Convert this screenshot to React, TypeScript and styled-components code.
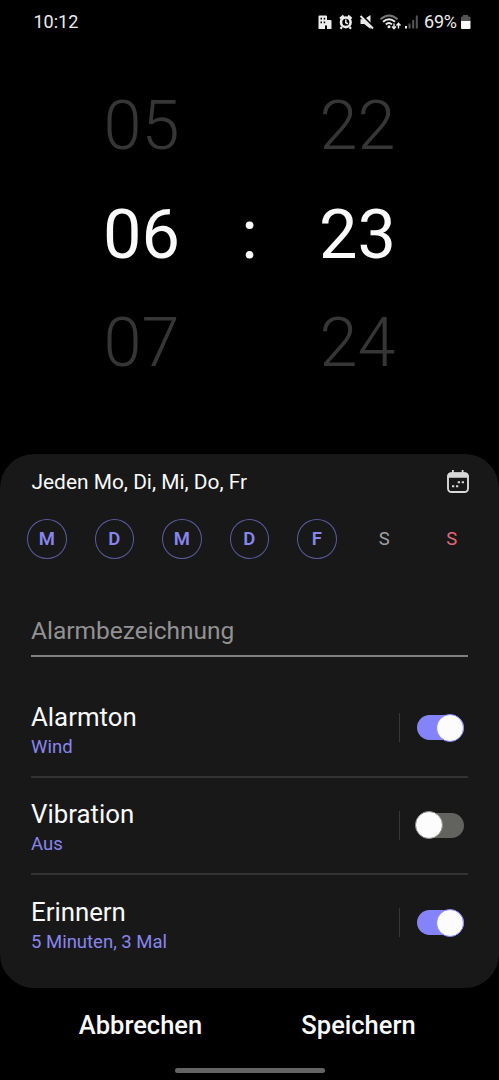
import React from "react";
import styled, { createGlobalStyle } from "styled-components";

const GlobalStyle = createGlobalStyle`
  * { box-sizing: border-box; }
  body { margin: 0; background: #000; font-family: Roboto, "Liberation Sans", sans-serif; color: #fafafa; }
  button, input { font-family: inherit; border: 0; padding: 0; background: none; color: inherit; }
`;

const Screen = styled.main`
  display: flex;
  flex-direction: column;
  width: 499px;
  height: 1080px;
  overflow: hidden;
  background: #000;
`;

const StatusBar = styled.header`
  display: flex;
  justify-content: space-between;
  height: 72px;
  padding: 11px 28px 0 33.5px;
  font-size: 18px;
  line-height: 22px;
  color: #ececec;
`;

const StatusIcons = styled.div`
  display: flex;
  height: 22px;
`;

const BatteryLevel = styled.span`
  width: 35px;
  letter-spacing: -0.2px;
`;

const Picker = styled.section`
  display: grid;
  grid-template-columns: 150px 66px 150px;
  grid-template-rows: repeat(3, 108.5px);
  justify-content: center;
  height: 382px;
`;

const Digits = styled.div<{ $active?: boolean }>`
  display: flex;
  align-items: center;
  justify-content: center;
  font-size: 68.5px;
  line-height: 80px;
  font-weight: ${(p) => (p.$active ? 400 : 300)};
  color: ${(p) => (p.$active ? "#fafafa" : "#363636")};
`;

const Card = styled.section`
  height: 533.5px;
  flex: none;
  border-radius: 34px;
  background: #181818;
`;

const RepeatHeader = styled.div`
  display: flex;
  align-items: center;
  justify-content: space-between;
  height: 54px;
  padding: 1px 29.5px 0 31.5px;
  font-size: 20.9px;
`;

const Days = styled.div`
  display: grid;
  grid-template-columns: repeat(7, 67.5px);
  justify-items: center;
  padding: 11px 0 0 13px;
`;

const Day = styled.button<{ $selected?: boolean; $color: string }>`
  width: 39.5px;
  height: 40px;
  padding-bottom: 1px;
  border: 1px solid ${(p) => (p.$selected ? "#5c5aa0" : "transparent")};
  border-radius: 50%;
  font-size: 18.5px;
  font-weight: ${(p) => (p.$selected ? 600 : 400)};
  color: ${(p) => p.$color};
`;

const NameInput = styled.input`
  display: block;
  width: 437px;
  height: 52px;
  margin: 46px 0 23px 31px;
  padding-top: 1px;
  border-bottom: 2px solid #808080;
  border-radius: 0;
  font-size: 24.5px;
  outline: none;
  &::placeholder { color: #929292; opacity: 1; }
`;

const Option = styled.div`
  display: flex;
  align-items: center;
  height: 97.5px;
  margin: 0 31px;
  border-bottom: 2px solid #333;
  &:last-child { border-bottom-color: transparent; }
`;

const OptionText = styled.div`
  flex: 1;
  padding-top: 7px;
`;

const OptionTitle = styled.div`
  font-size: 25.8px;
  line-height: 31px;
`;

const OptionValue = styled.div`
  font-size: 18.5px;
  line-height: 28px;
  color: #8886ee;
`;

const ToggleArea = styled.div`
  display: flex;
  align-items: center;
  width: 69px;
  height: 29px;
  padding-left: 16.5px;
  border-left: 1px solid #373737;
`;

const Track = styled.span<{ $on: boolean }>`
  display: flex;
  align-items: center;
  justify-content: ${(p) => (p.$on ? "flex-end" : "flex-start")};
  width: 47px;
  height: 25px;
  border-radius: 13px;
  background: ${(p) => (p.$on ? "#8583fa" : "#62635f")};
`;

const Thumb = styled.span<{ $on: boolean }>`
  flex: none;
  width: 28px;
  height: 28px;
  margin: 0 -0.5px 0 -1.5px;
  border: 1px solid ${(p) => (p.$on ? "#8583fa" : "#8c8c88")};
  border-radius: 50%;
  background: #fcfcfc;
`;

const Actions = styled.footer`
  display: flex;
  justify-content: center;
  height: 80.5px;
  padding: 15.5px 31px 0;
`;

const Action = styled.button`
  width: 218px;
  height: 44px;
  font-size: 25.5px;
  font-weight: 500;
`;

const HomeBar = styled.div`
  width: 150px;
  height: 5px;
  margin: 0 auto;
  border-radius: 3px;
  background: #646464;
`;

const StatusGlyphs = () => (
  <svg width="108" height="22" viewBox="316 11 108 22" fill="#ececec">
    <path fillRule="evenodd" d="M319.500 15.500h6.500q1 0 1 1V20h3.500q1 0 1 1v8H327v-3.500h-2V29h-6.500V16.500q0-1 1-1ZM320.500 17.700v1.800h1.500v-1.800Zm3.200 0v1.800h1.500v-1.800Zm-3.200 3.800v1.800h1.500v-1.800Zm3.200 0v1.800h1.500v-1.800Z" />
    <circle cx="345.800" cy="22.300" r="4.800" fill="none" stroke="#ececec" strokeWidth="2.600" />
    <path d="M340 18.700l3.600-3.100M351.600 18.700l-3.600-3.100M342 27l-1.500 1.700M349.500 27l1.500 1.700" fill="none" stroke="#ececec" strokeWidth="2.200" />
    <path d="M345.800 19.500v3.200l2.200 1" fill="none" stroke="#ececec" strokeWidth="1.500" />
    <path d="M360.500 19.300h3.700l6.300-4.300v14l-6.300-5h-3.700Z" />
    <path d="M361.800 15.200l12.500 12.500" stroke="#000" strokeWidth="2.200" />
    <path d="M360.500 16l12.500 12.500" stroke="#ececec" strokeWidth="2" />
    <path d="M380.500 19.200q8.500-7.600 17 0" fill="none" stroke="#777" strokeWidth="1.900" />
    <path d="M383 21.800q6-5.200 12 0M385.800 24.400q3.200-2.600 6.200 0" fill="none" stroke="#ececec" strokeWidth="1.900" />
    <circle cx="389" cy="26.700" r="1.500" />
    <path d="M394 23.500v5m-2-2l2 2.200 2-2.200M398.500 28.500v-5m-2 2l2-2.200 2 2.200" fill="none" stroke="#ececec" strokeWidth="1.400" />
    <path d="M405 26h2v2.500h-2Z" />
    <path d="M408.500 23.500h2v5h-2ZM412.200 20h2v8.500h-2ZM415.800 15.500h2v13h-2Z" fill="#555" />
  </svg>
);

const Battery = () => (
  <svg width="12" height="22" viewBox="459 11 12 22">
    <path d="M463 15h5v1.500h1.500q1 0 1 1V22h-9.500v-4.500q0-1 1-1h1Z" fill="#555" />
    <path d="M461 21h9.500v7q0 1-1 1H462q-1 0-1-1Z" fill="#fafafa" />
  </svg>
);

const CalendarIcon = () => (
  <svg width="24" height="26" viewBox="0 0 24 26">
    <rect x="2" y="4.300" width="20" height="18.700" rx="3.500" fill="none" stroke="#d8d8d8" strokeWidth="1.900" />
    <path d="M1.300 8.800V7q0-3.500 3.500-3.500h14.400q3.500 0 3.500 3.500v1.800ZM6 1h1.800v4H6ZM15.700 1h1.800v4h-1.800Z" fill="#d8d8d8" />
    <path d="M11.700 12.200h2.300v2h-2.300ZM15.700 12.200H18v2h-2.300ZM6 16.300h2.300v2H6ZM10 16.300h2.300v2H10Z" fill="#d8d8d8" />
  </svg>
);

const days = [
  { label: "M", selected: true },
  { label: "D", selected: true },
  { label: "M", selected: true },
  { label: "D", selected: true },
  { label: "F", selected: true },
  { label: "S", color: "#a0a0a0" },
  { label: "S", color: "#e5677b" },
];

const options = [
  { title: "Alarmton", value: "Wind", on: true },
  { title: "Vibration", value: "Aus", on: false },
  { title: "Erinnern", value: "5 Minuten, 3 Mal", on: true },
];

export default function App() {
  return (
    <Screen>
      <GlobalStyle />
      <StatusBar>
        <span>10:12</span>
        <StatusIcons>
          <StatusGlyphs />
          <BatteryLevel>69%</BatteryLevel>
          <Battery />
        </StatusIcons>
      </StatusBar>
      <Picker>
        <Digits>05</Digits><span /><Digits>22</Digits>
        <Digits $active>06</Digits><Digits $active>:</Digits><Digits $active>23</Digits>
        <Digits>07</Digits><span /><Digits>24</Digits>
      </Picker>
      <Card>
        <RepeatHeader>
          <span>Jeden Mo, Di, Mi, Do, Fr</span>
          <CalendarIcon />
        </RepeatHeader>
        <Days>
          {days.map((d, i) => (
            <Day key={i} $selected={d.selected} $color={d.color ?? "#8886ee"}>{d.label}</Day>
          ))}
        </Days>
        <NameInput placeholder="Alarmbezeichnung" />
        <div>
          {options.map((o) => (
            <Option key={o.title}>
              <OptionText>
                <OptionTitle>{o.title}</OptionTitle>
                <OptionValue>{o.value}</OptionValue>
              </OptionText>
              <ToggleArea>
                <Track $on={o.on}><Thumb $on={o.on} /></Track>
              </ToggleArea>
            </Option>
          ))}
        </div>
      </Card>
      <Actions>
        <Action>Abbrechen</Action>
        <Action>Speichern</Action>
      </Actions>
      <HomeBar />
    </Screen>
  );
}
